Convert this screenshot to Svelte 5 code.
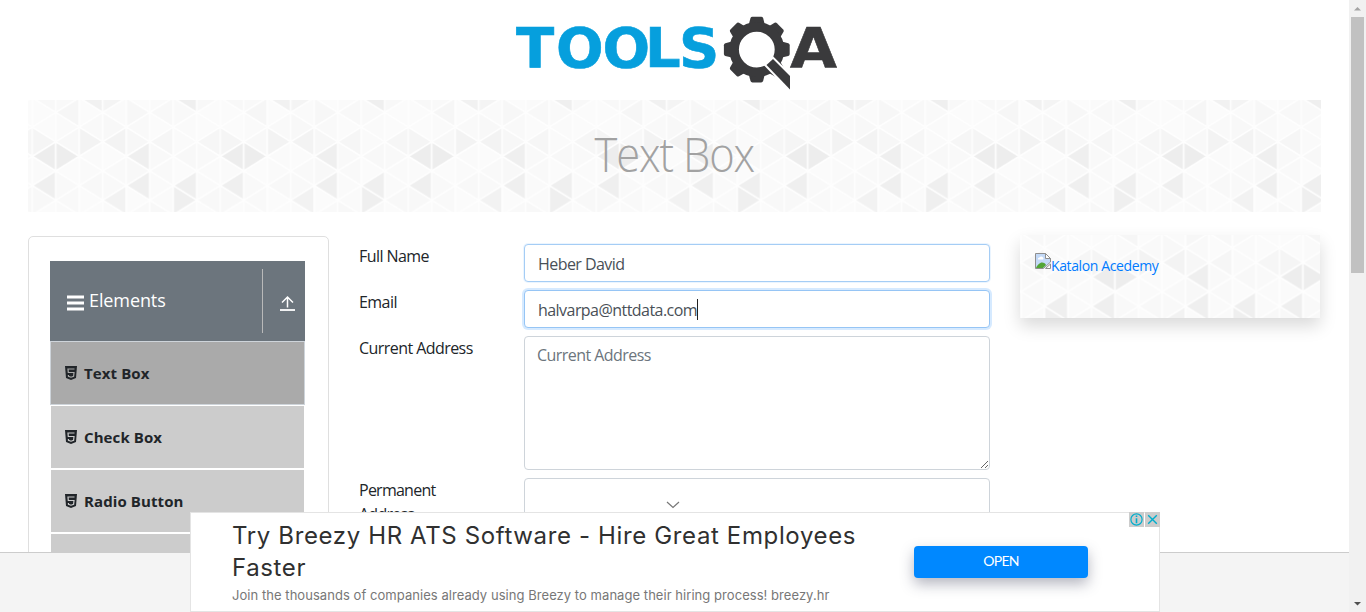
<script>
  const PW = 188;
  const COL = PW / 8;
  const HALF = 14.62;

  const shades = {
    '0,3': '#ededed', '1,3': '#ededed', '0,5': '#efefef', '4,3': '#efefef', '4,5': '#efefef',
    '6,5': '#efefef', '6,6': '#efefef', '3,6': '#f2f2f2', '2,2': '#f3f3f3', '3,2': '#f3f3f3',
    '0,2': '#f5f5f5', '2,-1': '#f1f1f1', '3,-1': '#f4f4f4', '6,-1': '#efefef', '5,2': '#f6f6f6',
    '7,2': '#f6f6f6', '4,2': '#f7f7f7', '1,0': '#f6f6f6', '4,0': '#f7f7f7'
  };
  const light = ['#fafafa', '#f9f9f9', '#fbfbfb', '#f8f8f8', '#fafafa', '#f9f9f9', '#fbfbfb'];

  const triangles = [];
  for (let c = 0; c < 8; c++) {
    for (let j = -2; j < 9; j++) {
      const x1 = c * COL;
      const x2 = x1 + COL;
      const y = HALF * 2 + j * HALF;
      const left = (c + j) % 2 !== 0;
      const pts = left
        ? `${x1},${y} ${x2},${y - HALF} ${x2},${y + HALF}`
        : `${x2},${y} ${x1},${y - HALF} ${x1},${y + HALF}`;
      triangles.push({ pts, fill: shades[`${c},${j}`] ?? light[(c * 5 + (j + 2) * 3) % 7] });
    }
  }

  const items = ['Text Box', 'Check Box', 'Radio Button', 'Web Tables'];
  const teeth = [0, 45, 90, 135, 180, 225, 270, 315];
</script>

{#snippet mosaic(id, dx, dy)}
  <svg class="mosaic" aria-hidden="true">
    <defs>
      <pattern {id} width={PW} height="146.2" patternUnits="userSpaceOnUse" patternTransform="translate({dx} {dy})">
        {#each triangles as t}
          <polygon points={t.pts} fill={t.fill} stroke="#fefefe" stroke-width="1.5" stroke-linejoin="round" />
        {/each}
      </pattern>
    </defs>
    <rect width="100%" height="100%" fill="url(#{id})" />
  </svg>
{/snippet}

<div class="window">
  <div class="page">
    <header>
      <svg class="logo" viewBox="0 0 350 100" width="350" height="100">
        <text class="word" x="16 56 102.5 145 179" y="67">TOOLS</text>
        <g transform="translate(256.8 49.6)" fill="#3a3a3c">
          {#each teeth as a}
            <path transform="rotate({a})" d="M-8 -25 L-6.3 -31.5 Q-5.8 -32.9 -4.4 -32.9 H4.4 Q5.8 -32.9 6.3 -31.5 L8 -25Z" />
          {/each}
          <circle r="22.7" fill="none" stroke="#3a3a3c" stroke-width="9.6" />
        </g>
        <path d="M266.5 65 L273 59 L290 76 V89.5Z" fill="#3a3a3c" stroke="#fff" stroke-width="4" paint-order="stroke" />
        <text class="word dark" x="290" y="67" textLength="47" lengthAdjust="spacingAndGlyphs">A</text>
      </svg>
    </header>

    <section class="banner">
      {@render mosaic('banner-tile', 4.3, -16.7)}
      <h1>Text Box</h1>
    </section>

    <main>
      <aside class="sidebar">
        <div class="group">
          <svg width="18" height="16" viewBox="0 0 18 16"><path d="M0 2h17M0 8h17M0 14h17" stroke="#fff" stroke-width="2.8" /></svg>
          <span class="group-name">Elements</span>
          <span class="toggle">
            <svg width="16" height="17" viewBox="0 0 16 17" fill="none" stroke="#fff"><path d="M7.500 12.500V2M2 7.500L7.500 2l5.500 5.500" stroke-width="1.500" /><path d="M0 15h15" stroke-width="1.800" /></svg>
          </span>
        </div>
        <ul>
          {#each items as item, i}
            <li class:active={i === 0}>
              <svg width="12" height="14" viewBox="0 0 12 14"><path d="M0 0h12l-1 12-5 2-5-2z" fill="#212529" /><path d="M9.500 3H3l.3 3.500h5.700l-.4 3.800-2.600.9-2.500-.9-.1-1.300" fill="none" stroke={i === 0 ? '#aaa' : '#ccc'} stroke-width="1.200" /></svg>
              <span>{item}</span>
            </li>
          {/each}
        </ul>
      </aside>

      <form>
        <label for="name">Full Name</label>
        <input id="name" class="field lit" value="Heber David" />
        <label for="email">Email</label>
        <div id="email" class="field focus"><span>halvarpa@nttdata.com</span><i class="caret"></i></div>
        <label for="current">Current Address</label>
        <textarea id="current" class="field" placeholder="Current Address"></textarea>
        <label for="permanent">Permanent Address</label>
        <textarea id="permanent" class="field"></textarea>
      </form>

      <div class="promo">
        {@render mosaic('promo-tile', 71.5, -31)}
        <a href="#katalon">
          <svg width="16" height="16" viewBox="0 0 16 16">
            <path d="M.5 .5h10l5 5V9l-7 6.5h-8z" fill="#c3d9f7" stroke="#8f8f8f" />
            <path d="M10.5.5v5h5z" fill="#fff" stroke="#8f8f8f" />
            <path d="M3 6.5a1.500 1.500 0 0 1 1.500-2 2 2 0 0 1 3.500 0 1.300 1.300 0 0 1 0 2z" fill="#fff" />
            <path d="M1 15c1-3 4-5.500 6-5.500s3.500 1 4 2.500L8 15z" fill="#52a535" />
            <path d="M10.500 15.500l5-4.500v4.500z" fill="#fff" stroke="#8f8f8f" />
          </svg><span>Katalon Acedemy</span>
        </a>
      </div>
    </main>

    <footer></footer>

    <svg class="chevron" width="14" height="8" viewBox="0 0 14 8"><path d="M1 1l6 5.500L13 1" fill="none" stroke="#777" stroke-width="1.200" /></svg>

    <div class="ad">
      <div class="copy">
        <div class="headline">Try Breezy HR ATS Software - Hire Great Employees<br />Faster</div>
        <div class="sub">Join the thousands of companies already using Breezy to manage their hiring process! breezy.hr</div>
      </div>
      <button>OPEN</button>
      <div class="choices">
        <svg width="15" height="15" viewBox="0 0 15 15"><rect width="15" height="15" fill="#ccc" /><circle cx="7.500" cy="7.500" r="5.600" fill="none" stroke="#00aecd" stroke-width="1.200" /><path d="M7.500 3.500v1.600M7.500 6.200v5" stroke="#00aecd" stroke-width="1.600" /></svg>
        <svg width="15" height="15" viewBox="0 0 15 15"><rect width="15" height="15" fill="#ccc" /><path d="M3.200 3.200l8.600 8.600M11.800 3.200l-8.600 8.600" stroke="#00aecd" stroke-width="1.400" /></svg>
      </div>
    </div>
  </div>

  <div class="scrollbar">
    <svg width="17" height="17" viewBox="0 0 17 17"><path d="M5 10.500L8.500 7l3.500 3.500z" fill="#a3a3a3" /></svg>
    <div class="thumb"></div>
    <svg width="17" height="17" viewBox="0 0 17 17"><path d="M5 7h7l-3.500 3.500z" fill="#505050" /></svg>
  </div>
</div>

<style>
  :global(body) { margin: 0; overflow: hidden; }
  * { box-sizing: border-box; }
  .window {
    display: flex;
    width: 1366px;
    height: 612px;
    overflow: hidden;
    background: #fff;
    color: #212529;
    font: 16px/24px "Open Sans", "Noto Sans", sans-serif;
  }
  .page { position: relative; width: 1349px; height: 612px; overflow: hidden; }
  header { height: 100px; padding-left: 500px; }
  .logo { display: block; }
  .word { font: bold 56px "DejaVu Sans", sans-serif; fill: #069fdd; stroke: #069fdd; stroke-width: 0.6; }
  .dark { fill: #3a3a3c; stroke: #3a3a3c; }

  .mosaic { position: absolute; inset: 0; width: 100%; height: 100%; z-index: -1; }
  .banner {
    position: relative;
    z-index: 0;
    width: 1293px;
    height: 112px;
    margin-left: 28px;
    padding-bottom: 4px;
    display: flex;
    align-items: center;
    justify-content: center;
  }
  h1 { margin: 0; font-size: 47px; line-height: 58px; font-weight: 300; color: #a2a2a2; letter-spacing: -1.2px; transform: scaleX(0.925); }

  main { display: flex; align-items: flex-start; padding: 24px 0 0 28px; }
  .sidebar { width: 301px; height: 420px; border: 1px solid #dfdfdf; border-radius: 5px; padding: 24px 23px 0 21px; }
  .group { height: 80px; background: #6c757d; color: #fff; display: flex; align-items: center; padding-left: 17px; }
  .group > svg { margin-top: 3px; }
  .group-name { flex: 1; margin: -2px 0 0 4px; font-size: 18px; letter-spacing: -0.1px; }
  .toggle { width: 43px; height: 64px; border-left: 1px solid #b9b9b9; display: flex; align-items: center; padding: 4px 0 0 17px; }
  ul { list-style: none; margin: 0; padding: 0; }
  li { height: 64px; border: 1px solid #fff; background: #ccc; background-clip: padding-box; display: flex; align-items: center; gap: 7px; padding-left: 14px; font-size: 15px; font-weight: 700; letter-spacing: 0.1px; }
  li.active { border-color: #ced4da; background-color: #aaa; }

  form {
    display: grid;
    grid-template-columns: 165px 466px;
    row-gap: 8px;
    margin: 8px 0 0 30px;
  }
  label { width: 110px; white-space: nowrap; letter-spacing: -0.56px; color: #212529; }
  label[for='permanent'] { white-space: normal; letter-spacing: -0.75px; }
  .field {
    width: 466px;
    height: 38px;
    margin: 0;
    padding: 7px 12px 5px;
    border: 1px solid #ced4da;
    border-radius: 4px;
    background: #fff;
    color: #495057;
    font: inherit;
    letter-spacing: -0.55px;
    outline: 0;
  }
  textarea.field { height: 134px; padding-top: 6px; resize: vertical; display: block; }
  textarea::placeholder { color: #6c757d; }
  .lit { border-color: #a5cdf5; box-shadow: 0 0 0 1px rgba(0, 123, 255, 0.08); }
  .focus { border-color: #96c5f5; box-shadow: 0 0 0 2px rgba(0, 123, 255, 0.16); display: flex; }
  .lit, .focus { padding-left: 13px; }
  .caret { width: 1px; height: 21px; background: #222; margin-top: 1px; }

  .promo {
    position: relative;
    z-index: 0;
    width: 300px;
    height: 83px;
    margin: -1px 0 0 30px;
    padding: 18px 15px;
    box-shadow: 0 8px 16px rgba(0, 0, 0, 0.15);
  }
  a { display: flex; color: #007bff; text-decoration: none; font-size: 14px; letter-spacing: -0.38px; }
  a span { line-height: 26px; }

  footer { position: absolute; left: 0; right: 0; bottom: 0; height: 60px; background: #f4f4f4; border-top: 1px solid #ccc; }
  .chevron { position: absolute; left: 666px; top: 501px; }

  .ad {
    position: absolute;
    left: 190px;
    top: 512px;
    width: 970px;
    height: 100px;
    border: 1px solid #e4e4e4;
    background: #fff;
    display: flex;
    align-items: flex-start;
  }
  .copy { width: 682px; margin: 7px 0 0 41px; white-space: nowrap; }
  .headline { font: 24px/32px Inter, sans-serif; color: #303030; letter-spacing: 0.63px; }
  .sub { font: 13px/20px Inter, sans-serif; color: #777; letter-spacing: 0.05px; margin-top: 1px; }
  button {
    width: 174px;
    height: 32px;
    margin-top: 33px;
    padding: 0 0 3px;
    border: 0;
    border-radius: 4px;
    background: #08f;
    color: #fff;
    font: 14px Lato, sans-serif;
    letter-spacing: -0.7px;
    box-shadow: 0 6px 14px rgba(60, 64, 90, 0.38);
  }
  .choices { position: absolute; right: -1px; top: -1px; display: flex; gap: 1px; }

  .scrollbar { width: 17px; height: 612px; background: #f1f1f1; display: flex; flex-direction: column; }
  .scrollbar svg { display: block; flex: none; }
  .scrollbar svg:last-child { margin-top: auto; }
  .thumb { width: 13px; height: 256px; margin-left: 2px; background: #c1c1c1; }
</style>
